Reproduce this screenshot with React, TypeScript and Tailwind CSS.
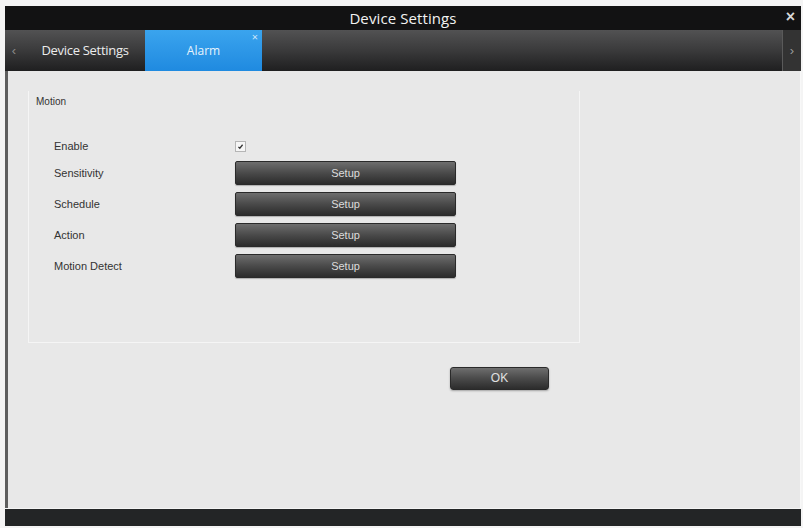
export default function App() {
  const rows = [
    { label: "Sensitivity", mt: "mt-[8px]" },
    { label: "Schedule", mt: "mt-[7px]" },
    { label: "Action", mt: "mt-[7px]" },
    { label: "Motion Detect", mt: "mt-[7px]" },
  ];

  return (
    <div className="w-[803px] h-[528px] bg-[#f4f4f4] pt-[6px] pl-[5px] pr-[2px] pb-[2px] overflow-hidden font-['Liberation_Sans',Arial,sans-serif]">
      <div className="flex flex-col h-full">

        {/* ── Title bar ── */}
        <div className="relative h-[24px] bg-[#121213] flex items-center justify-center shrink-0">
          <span className="text-[15px] text-[#f2f2f2] font-['Open_Sans',sans-serif] tracking-[0.1px]">Device Settings</span>
          <span className="absolute right-[6px] top-[2px] text-[16px] leading-[18px] text-[#d8d8d8] font-bold">×</span>
        </div>

        {/* ── Tab bar ── */}
        <div className="h-[41px] flex shrink-0 bg-gradient-to-b from-[#525253] via-[#3a3a3b] to-[#1f1f20]">
          <div className="w-[18px] flex items-center justify-center text-[#8a8a8a] text-[13px]">‹</div>
          <div className="w-[122px] flex items-center justify-center pl-[2px] text-[13px] text-[#ececec] font-['Open_Sans',sans-serif] tracking-[-0.3px]">
            Device Settings
          </div>
          <div className="relative w-[117px] flex items-center justify-center bg-gradient-to-b from-[#3aa4ee] to-[#1f8ae0] text-[12px] text-[#e8f3fc] font-['Open_Sans',sans-serif]">
            Alarm
            <span className="absolute right-[4px] top-[1px] text-[11px] leading-[12px] text-[#cfe6fa]">×</span>
          </div>
          <div className="flex-1" />
          <div className="w-[19px] border-l border-[#5a5a5a] flex items-center justify-center text-[#9a9a9a] text-[13px] bg-[#333]">›</div>
        </div>

        {/* ── Content ── */}
        <div className="flex-1 flex flex-col bg-[#e8e8e8] border-l-[3px] border-[#5e5e5e] border-r border-r-[#f8f8f8]">
          <div className="ml-[20px] mt-[20px] w-[552px] h-[252px] border-r border-b border-l border-[#f5f5f5]">
            <div className="pl-[7px] pt-[3px] text-[10px] text-[#333]">Motion</div>

            <div className="pl-[25px] pt-[31px]">
              <div className="flex items-center h-[13px]">
                <span className="w-[181px] text-[11px] text-[#333]">Enable</span>
                <span className="w-[11px] h-[11px] border border-[#b5b5b5] bg-[#f6f6f6] flex items-center justify-center">
                  <svg viewBox="0 0 10 10" className="w-[7px] h-[7px]">
                    <path d="M2 5.5 L4 7.5 L8 2.5" stroke="#333" strokeWidth="1.8" fill="none" />
                  </svg>
                </span>
              </div>

              {rows.map(r => (
                <div key={r.label} className={`flex items-center ${r.mt}`}>
                  <span className="w-[181px] text-[11px] text-[#333]">{r.label}</span>
                  <button className="w-[221px] h-[24px] rounded-[2px] bg-gradient-to-b from-[#6e6e6e] via-[#4a4a4a] to-[#2c2c2c] border border-[#2a2a2a] text-[11px] text-[#dcdcdc] shadow-[0_1px_1px_rgba(0,0,0,0.25)]">
                    Setup
                  </button>
                </div>
              ))}
            </div>
          </div>

          <div className="pl-[442px] mt-[22px]">
            <button className="w-[99px] h-[23px] rounded-[3px] bg-gradient-to-b from-[#6e6e6e] via-[#4a4a4a] to-[#2c2c2c] border border-[#2a2a2a] text-[12px] text-[#e0e0e0] shadow-[0_1px_2px_rgba(0,0,0,0.3)]">
              OK
            </button>
          </div>
        </div>

        {/* ── Bottom bar ── */}
        <div className="h-[17px] bg-[#232526] shrink-0 mt-[1px]" />
      </div>
    </div>
  );
}
